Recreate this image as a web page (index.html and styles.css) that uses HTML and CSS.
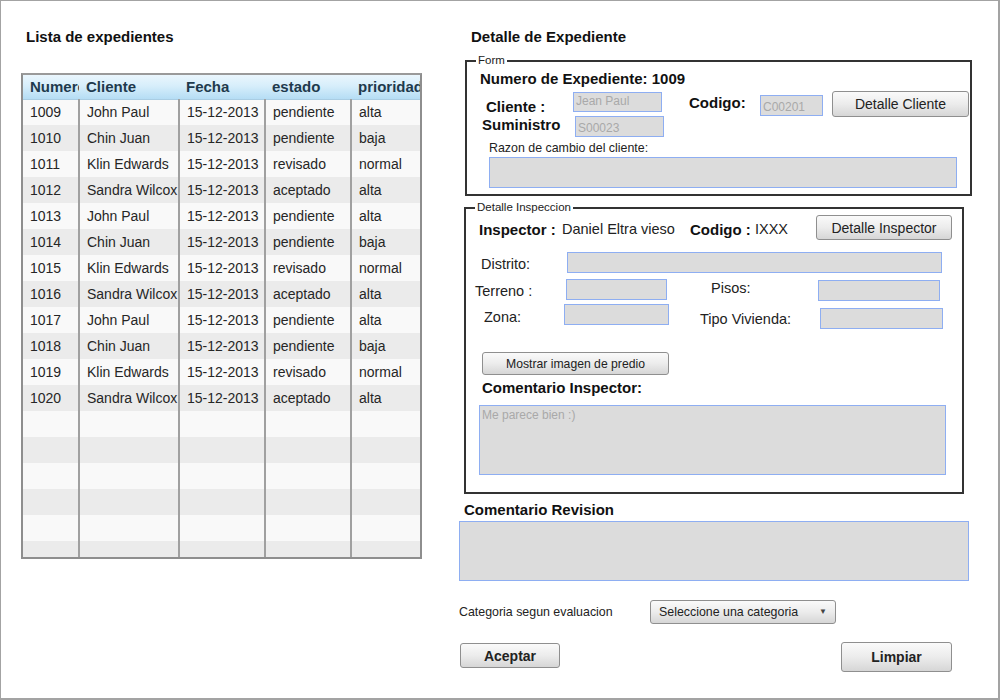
FILE: index.html
```html
<!DOCTYPE html>
<html lang="es">
<head>
<meta charset="utf-8">
<title>Expedientes</title>
<link rel="stylesheet" href="styles.css">
</head>
<body>
<div class="frame">
  <section class="left">
    <h1 class="title list-title">Lista de expedientes</h1>
    <div class="grid">
      <table class="tbl">
        <colgroup><col class="c1"><col class="c2"><col class="c3"><col class="c4"><col class="c5"></colgroup>
        <thead>
          <tr><th>Numero</th><th>Cliente</th><th>Fecha</th><th>estado</th><th>prioridad</th></tr>
        </thead>
        <tbody>
          <tr><td>1009</td><td>John Paul</td><td>15-12-2013</td><td>pendiente</td><td>alta</td></tr>
          <tr><td>1010</td><td>Chin Juan</td><td>15-12-2013</td><td>pendiente</td><td>baja</td></tr>
          <tr><td>1011</td><td>Klin Edwards</td><td>15-12-2013</td><td>revisado</td><td>normal</td></tr>
          <tr><td>1012</td><td>Sandra Wilcox</td><td>15-12-2013</td><td>aceptado</td><td>alta</td></tr>
          <tr><td>1013</td><td>John Paul</td><td>15-12-2013</td><td>pendiente</td><td>alta</td></tr>
          <tr><td>1014</td><td>Chin Juan</td><td>15-12-2013</td><td>pendiente</td><td>baja</td></tr>
          <tr><td>1015</td><td>Klin Edwards</td><td>15-12-2013</td><td>revisado</td><td>normal</td></tr>
          <tr><td>1016</td><td>Sandra Wilcox</td><td>15-12-2013</td><td>aceptado</td><td>alta</td></tr>
          <tr><td>1017</td><td>John Paul</td><td>15-12-2013</td><td>pendiente</td><td>alta</td></tr>
          <tr><td>1018</td><td>Chin Juan</td><td>15-12-2013</td><td>pendiente</td><td>baja</td></tr>
          <tr><td>1019</td><td>Klin Edwards</td><td>15-12-2013</td><td>revisado</td><td>normal</td></tr>
          <tr><td>1020</td><td>Sandra Wilcox</td><td>15-12-2013</td><td>aceptado</td><td>alta</td></tr>
          <tr><td></td><td></td><td></td><td></td><td></td></tr>
          <tr><td></td><td></td><td></td><td></td><td></td></tr>
          <tr><td></td><td></td><td></td><td></td><td></td></tr>
          <tr><td></td><td></td><td></td><td></td><td></td></tr>
          <tr><td></td><td></td><td></td><td></td><td></td></tr>
          <tr><td></td><td></td><td></td><td></td><td></td></tr>
        </tbody>
      </table>
    </div>
  </section>

  <section class="right">
    <h1 class="title detail-title">Detalle de Expediente</h1>

    <div class="box form-box">
      <span class="legend">Form</span>
      <div class="b num-exp">Numero de Expediente: 1009</div>
      <div class="row r-cliente">
        <span class="b lbl-cliente">Cliente :</span>
        <span class="inp in-cliente">Jean Paul</span>
        <span class="b lbl-codigo">Codigo:</span>
        <span class="inp in-codigo">C00201</span>
        <span class="btn btn-cliente">Detalle Cliente</span>
      </div>
      <div class="row r-sum">
        <span class="b lbl-sum">Suministro</span>
        <span class="inp in-sum">S00023</span>
      </div>
      <div class="small razon">Razon de cambio del cliente:</div>
      <div class="inp ta-razon"></div>
    </div>

    <div class="box insp-box">
      <span class="legend">Detalle Inspeccion</span>
      <div class="row r-insp">
        <span class="b lbl-insp">Inspector :</span>
        <span class="lbl val-insp">Daniel Eltra vieso</span>
        <span class="b lbl-icod">Codigo :</span>
        <span class="lbl val-icod">IXXX</span>
        <span class="btn btn-insp">Detalle Inspector</span>
      </div>
      <div class="row r-dist">
        <span class="lbl lbl-dist">Distrito:</span>
        <span class="inp in-dist"></span>
      </div>
      <div class="row r-terr">
        <span class="lbl lbl-terr">Terreno :</span>
        <span class="inp in-terr"></span>
        <span class="lbl lbl-pisos">Pisos:</span>
        <span class="inp in-pisos"></span>
      </div>
      <div class="row r-zona">
        <span class="lbl lbl-zona">Zona:</span>
        <span class="inp in-zona"></span>
        <span class="lbl lbl-tipo">Tipo Vivienda:</span>
        <span class="inp in-tipo"></span>
      </div>
      <span class="btn btn-img">Mostrar imagen de predio</span>
      <div class="b com-insp">Comentario Inspector:</div>
      <div class="inp ta-insp">Me parece bien :)</div>
    </div>

    <div class="b com-rev">Comentario Revision</div>
    <div class="inp ta-rev"></div>

    <div class="row r-cat">
      <span class="small lbl-cat">Categoria segun evaluacion</span>
      <span class="btn select">Seleccione una categoria<span class="arrow">&#9660;</span></span>
    </div>

    <div class="row r-actions">
      <span class="btn b btn-aceptar">Aceptar</span>
      <span class="btn b btn-limpiar">Limpiar</span>
    </div>
  </section>
</div>
</body>
</html>
```

FILE: styles.css
```css
* { box-sizing: border-box; }

html, body {
  margin: 0;
  padding: 0;
  background: #ffffff;
}

body {
  font-family: "Liberation Sans", Arial, sans-serif;
  font-size: 14px;
  color: #1a1a1a;
}

.frame {
  width: 1000px;
  height: 700px;
  border: 1px solid #a3a3a3;
  border-right-width: 2px;
  border-bottom-width: 2px;
  display: flex;
  overflow: hidden;
}

.title {
  margin: 0;
  font-size: 15px;
  font-weight: bold;
  line-height: 18px;
  color: #111;
}

.b { font-weight: bold; font-size: 15px; line-height: 18px; color: #111; }
.lbl { font-size: 14.5px; line-height: 18px; color: #222; }
.small { font-size: 12.4px; line-height: 14px; color: #222; }

/* ---------- left column ---------- */
.left {
  width: 439px;
  flex: none;
}

.list-title {
  margin: 27px 0 0 25px;
}

.grid {
  margin: 27px 0 0 20px;
  width: 401px;
  height: 486px;
  border: 2px solid #8e8e8e;
  border-top-color: #9a9a9a;
  overflow: hidden;
  background: #fafafa;
}

.tbl {
  border-collapse: collapse;
  table-layout: fixed;
  width: 397px;
}

.tbl .c1 { width: 56px; }
.tbl .c2 { width: 100px; }
.tbl .c3 { width: 86px; }
.tbl .c4 { width: 86px; }
.tbl .c5 { width: 69px; }

.tbl th,
.tbl td {
  padding: 0 0 0 7px;
  white-space: nowrap;
  overflow: hidden;
  text-align: left;
}

.tbl th {
  height: 24px;
  font-weight: bold;
  font-size: 15px;
  color: #1f3a4d;
  background: linear-gradient(#eaf6fd 0%, #d7eefb 45%, #b5ddf4 100%);
  border-bottom: 1px solid #a9cde3;
}

.tbl td {
  height: 26px;
  font-size: 14px;
  color: #262626;
  border-right: 2px solid #a0a0a0;
}

.tbl td:last-child { border-right: none; }

.tbl tbody tr:nth-child(odd) td { background: #f9f9f9; }
.tbl tbody tr:nth-child(even) td { background: #ebebeb; }

/* ---------- right column ---------- */
.right {
  flex: 1;
  display: flex;
  flex-direction: column;
  align-items: flex-start;
}

.detail-title {
  margin: 27px 0 0 31px;
}

.box {
  position: relative;
  border: 2px solid #333;
}

.legend {
  position: absolute;
  top: -8px;
  left: 9px;
  padding: 0 2px;
  background: #fff;
  font-size: 11.5px;
  line-height: 13px;
  color: #222;
}

.row {
  display: flex;
  align-items: flex-start;
}

.inp {
  display: block;
  flex: none;
  background: #dcdcdc;
  border: 1px solid #8eaef2;
  color: #a9a9a9;
  font-size: 12px;
  line-height: 16px;
  padding: 1px 0 0 2px;
  white-space: nowrap;
  overflow: hidden;
}

.btn {
  display: flex;
  align-items: center;
  justify-content: center;
  flex: none;
  border: 1px solid #8f8f8f;
  border-radius: 3px;
  background: linear-gradient(#fafafa 0%, #ececec 50%, #d6d6d6 100%);
  color: #222;
  font-size: 14px;
}

/* Form box */
.form-box {
  margin: 14px 0 0 25px;
  width: 507px;
  height: 136px;
}

.num-exp { margin: 8px 0 0 13px; }

.r-cliente { height: 28px; }
.lbl-cliente { margin: 10px 0 0 19px; width: 87px; }
.in-cliente { margin-top: 4px; width: 89px; height: 20px; padding-top: 0; }
.lbl-codigo { margin: 6px 0 0 27px; width: 71px; }
.in-codigo { margin-top: 7px; width: 63px; height: 21px; padding-top: 3px; }
.btn-cliente { margin: 3px 0 0 9px; width: 137px; height: 26px; }

.lbl-sum { margin: 0 0 0 15px; width: 93px; }
.in-sum { width: 89px; height: 21px; padding-top: 3px; }

.razon { margin: 4px 0 0 22px; }
.ta-razon { margin: 2px 0 0 22px; width: 468px; height: 31px; }

/* Inspection box */
.insp-box {
  margin: 11px 0 0 24px;
  width: 500px;
  height: 287px;
}

.r-insp { margin-top: 6px; height: 25px; }
.lbl-insp { margin: 6px 0 0 13px; width: 83px; }
.val-insp { margin-top: 5px; width: 128px; }
.lbl-icod { margin-top: 6px; width: 65px; }
.val-icod { margin-top: 5px; width: 61px; }
.btn-insp { width: 136px; height: 25px; }

.r-dist { margin-top: 12px; }
.lbl-dist { margin: 3px 0 0 15px; width: 86px; }
.in-dist { width: 375px; height: 21px; }

.r-terr { margin-top: 6px; }
.lbl-terr { margin: 3px 0 0 9px; width: 91px; }
.in-terr { width: 101px; height: 21px; }
.lbl-pisos { margin: 0 0 0 44px; width: 107px; }
.in-pisos { margin-top: 1px; width: 122px; height: 21px; }

.r-zona { margin-top: 3px; }
.lbl-zona { margin: 4px 0 0 18px; width: 80px; }
.in-zona { width: 105px; height: 21px; }
.lbl-tipo { margin: 6px 0 0 31px; width: 120px; }
.in-tipo { margin-top: 4px; width: 123px; height: 21px; }

.btn-img {
  margin: 23px 0 0 16px;
  width: 187px;
  height: 23px;
  font-size: 12.2px;
}

.com-insp { margin: 4px 0 0 16px; }
.ta-insp { margin: 8px 0 0 13px; width: 467px; height: 70px; }

/* below */
.com-rev { margin: 7px 0 0 24px; }
.ta-rev { margin: 2px 0 0 19px; width: 510px; height: 60px; }

.r-cat { margin-top: 19px; }
.lbl-cat { margin: 5px 0 0 19px; width: 191px; }
.select {
  width: 186px;
  height: 24px;
  justify-content: flex-start;
  padding-left: 8px;
  font-size: 12.4px;
  position: relative;
}
.arrow {
  position: absolute;
  right: 8px;
  top: 6px;
  font-size: 8px;
  line-height: 10px;
  color: #444;
}

.r-actions { margin-top: 18px; }
.btn-aceptar { margin: 1px 0 0 20px; width: 100px; height: 25px; }
.btn-limpiar { margin-left: 281px; width: 111px; height: 30px; }
```
